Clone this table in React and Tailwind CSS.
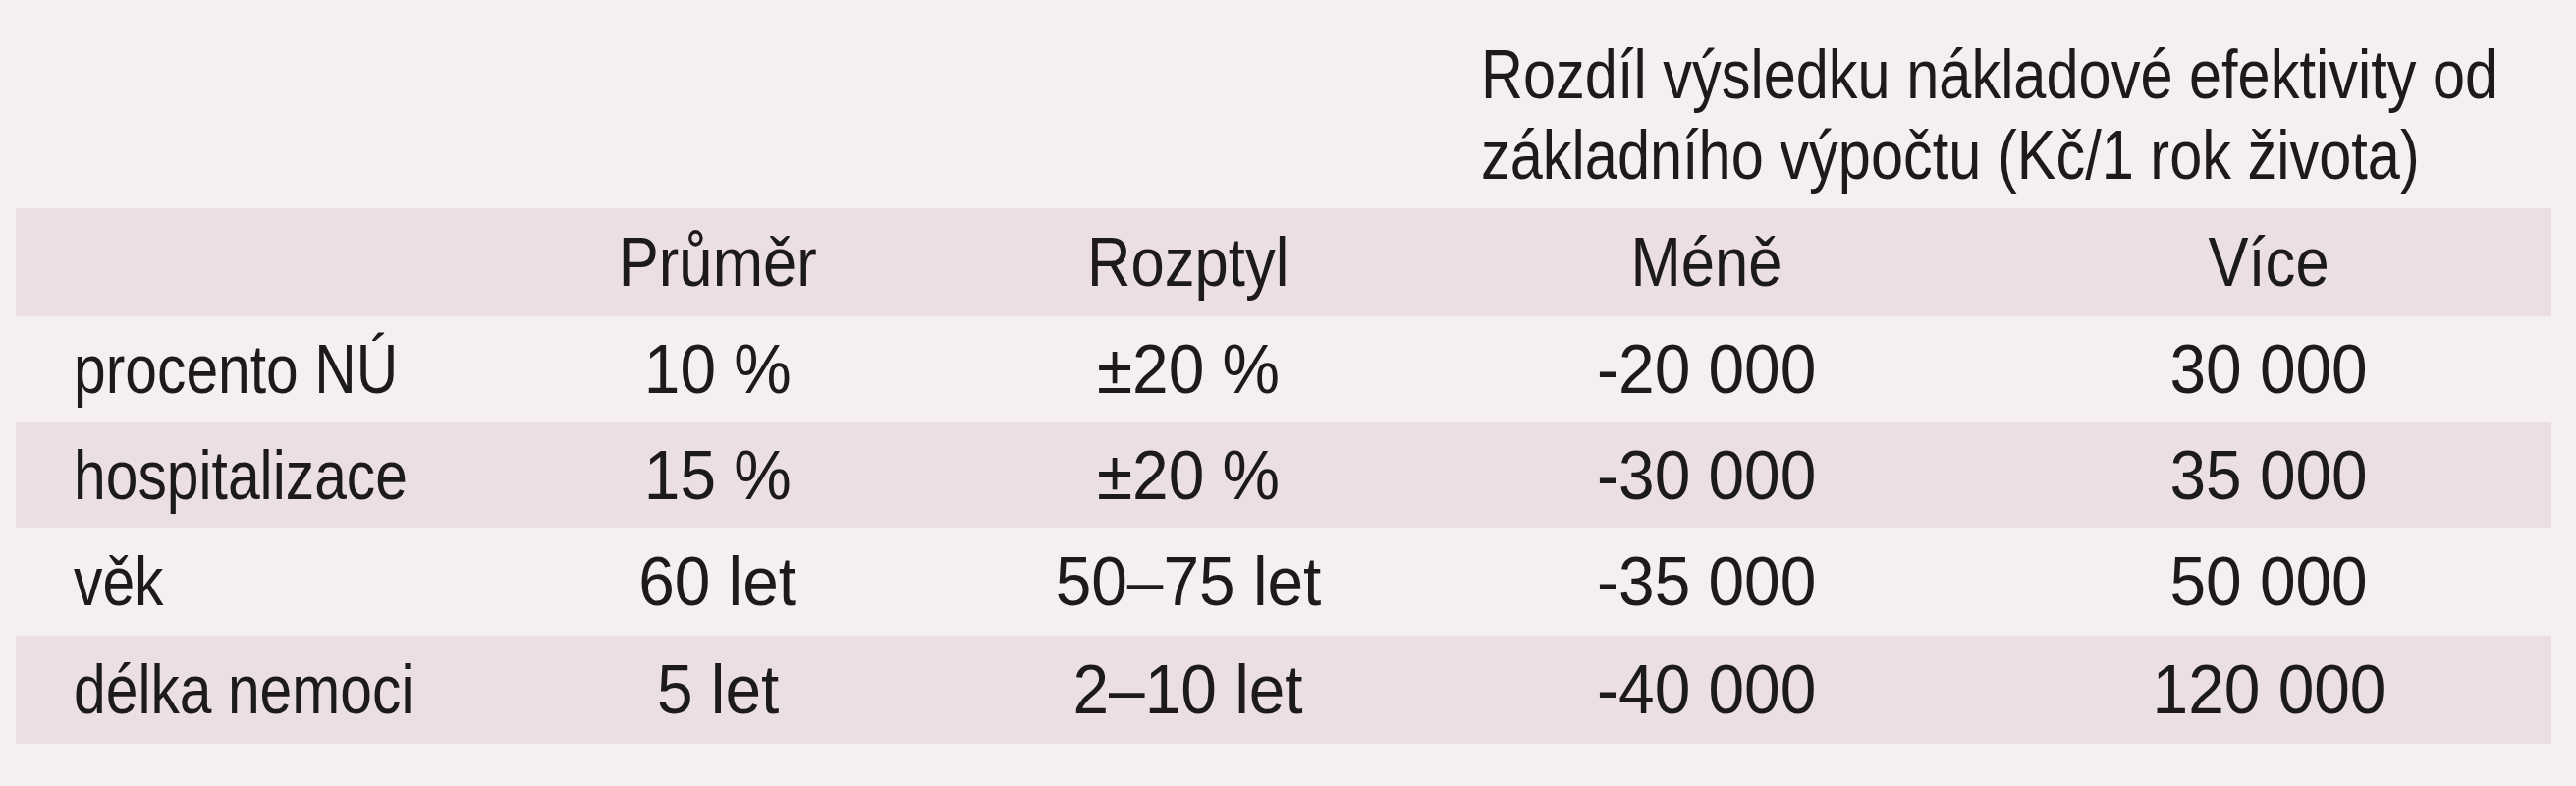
export default function App() {
  const rows = [
    { label: "procento NÚ", a: "10 %", b: "±20 %", c: "-20 000", d: "30 000", band: false, h: "h-[108px]" },
    { label: "hospitalizace", a: "15 %", b: "±20 %", c: "-30 000", d: "35 000", band: true, h: "h-[107px]" },
    { label: "věk", a: "60 let", b: "50–75 let", c: "-35 000", d: "50 000", band: false, h: "h-[110px]" },
    { label: "délka nemoci", a: "5 let", b: "2–10 let", c: "-40 000", d: "120 000", band: true, h: "h-[110px]" },
  ];
  const Num = ({ children }) => (
    <div className="flex items-center justify-center">
      <span className="inline-block whitespace-nowrap leading-none origin-center scale-x-[0.94]">{children}</span>
    </div>
  );
  const Txt = ({ children }) => (
    <div className="flex items-center justify-center">
      <span className="inline-block whitespace-nowrap leading-none origin-center scale-x-[0.88]">{children}</span>
    </div>
  );
  return (
    <div className="w-[2623px] h-[800px] bg-[#f5eff2] pl-[16px] font-['Liberation_Sans',Arial,sans-serif] text-[70px] text-[#1c1a1b]">
      <div className="grid grid-cols-[479px_472px_486px_570px_575px]">
        <div className="col-span-3 h-[212px]"></div>
        <div className="col-span-2 h-[212px] pl-[55px] pt-[35px] leading-[82px]">
          <span className="inline-block whitespace-nowrap origin-left scale-x-[0.85]">
            Rozdíl výsledku nákladové efektivity od
            <br />
            základního výpočtu (Kč/1 rok života)
          </span>
        </div>

        <div className="col-span-5 grid grid-cols-[479px_472px_486px_570px_575px] h-[110px] bg-[#ecdee5]">
          <div></div>
          <Txt>Průměr</Txt>
          <Txt>Rozptyl</Txt>
          <Txt>Méně</Txt>
          <Txt>Více</Txt>
        </div>

        {rows.map((r) => (
          <div
            key={r.label}
            className={`col-span-5 grid grid-cols-[479px_472px_486px_570px_575px] ${r.h} ${r.band ? "bg-[#ecdee5]" : ""}`}
          >
            <div className="flex items-center pl-[59px]">
              <span className="inline-block whitespace-nowrap leading-none origin-left scale-x-[0.84]">{r.label}</span>
            </div>
            <Num>{r.a}</Num>
            <Num>{r.b}</Num>
            <Num>{r.c}</Num>
            <Num>{r.d}</Num>
          </div>
        ))}
      </div>
    </div>
  );
}
